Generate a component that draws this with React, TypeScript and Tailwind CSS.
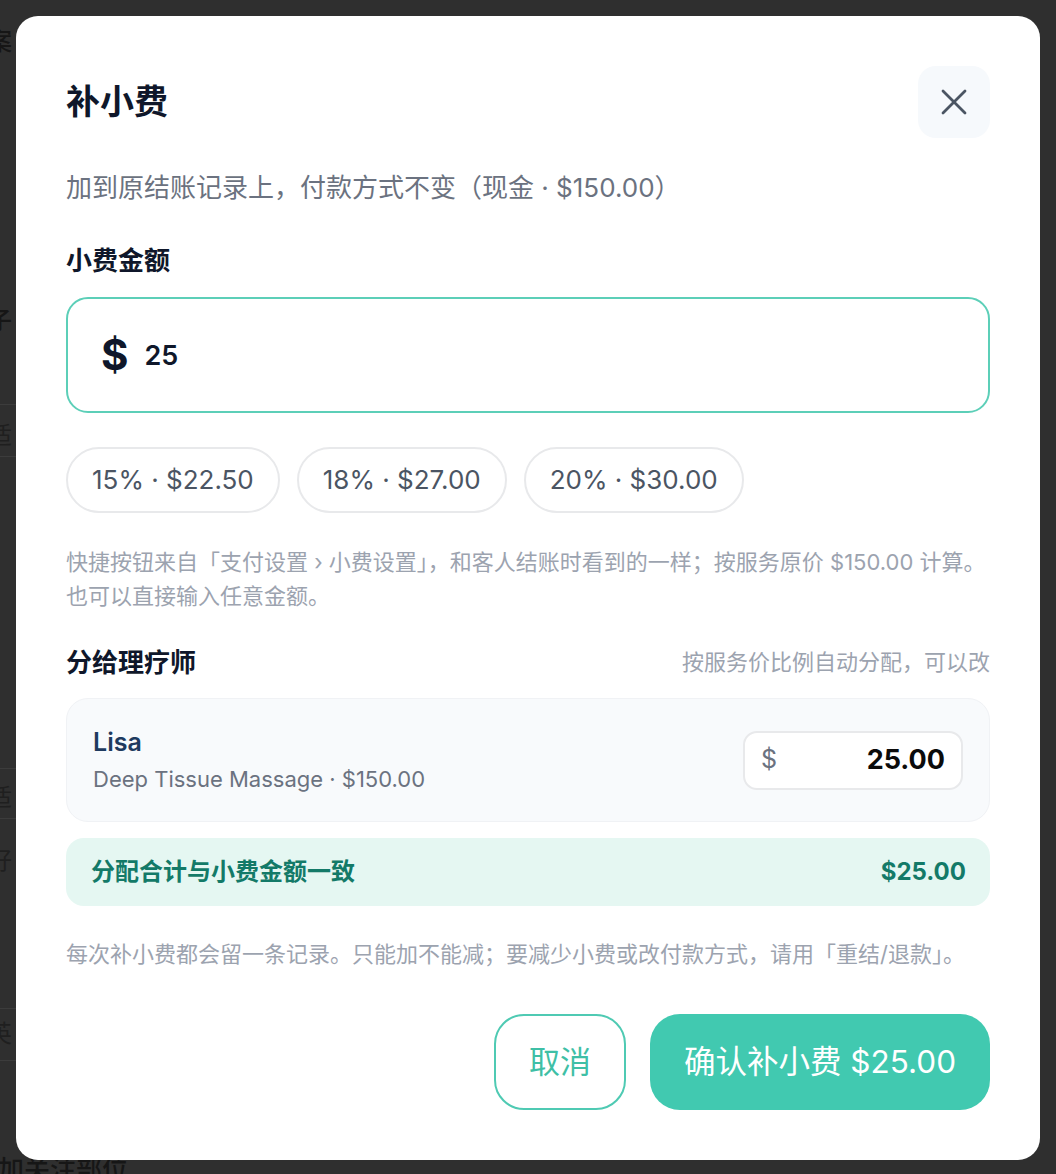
import React from "react";

const font = { fontFamily: '"Inter", "Noto Sans CJK SC", sans-serif' };

function Chip({ label }: { label: string }) {
  return (
    <button className="h-[66px] px-[24px] rounded-full border-2 border-[#e8e9eb] bg-white text-[26px] text-[#4b5563] leading-none">
      {label}
    </button>
  );
}

export default function App() {
  return (
    <div className="relative w-full h-[1174px] bg-[#2f2f2f] overflow-hidden" style={font}>
      {/* dimmed page behind the dialog */}
      <div className="absolute inset-0 text-[#161616] text-[24px] font-medium">
        <div className="absolute left-[-12px] top-[24px]">案</div>
        <div className="absolute left-[-12px] top-[303px]">子</div>
        <div className="absolute left-0 top-[404px] w-[16px] h-px bg-[#3c3c3c]" />
        <div className="absolute left-[-12px] top-[418px] text-[#1f1f1f] font-normal">适</div>
        <div className="absolute left-0 top-[456px] w-[16px] h-px bg-[#3c3c3c]" />
        <div className="absolute left-0 top-[768px] w-[16px] h-px bg-[#3c3c3c]" />
        <div className="absolute left-[-12px] top-[780px] text-[#1f1f1f] font-normal">适</div>
        <div className="absolute left-0 top-[818px] w-[16px] h-px bg-[#3c3c3c]" />
        <div className="absolute left-[-12px] top-[843px] text-[#1f1f1f] font-normal">好</div>
        <div className="absolute left-0 top-[1008px] w-[16px] h-px bg-[#3c3c3c]" />
        <div className="absolute left-[-12px] top-[1016px] text-[#1f1f1f] font-normal">英</div>
        <div className="absolute left-0 top-[1060px] w-[16px] h-px bg-[#3c3c3c]" />
        <div className="absolute left-[-2px] top-[1150px] text-[26px]">加关注部位</div>
      </div>

      <div className="relative m-4 h-[1144px] bg-white rounded-[22px] px-[50px] pt-[50px] pb-[50px] flex flex-col">
        {/* header */}
        <div className="flex items-center justify-between h-[72px]">
          <h1 className="text-[34px] font-bold text-[#0f172a] leading-none">补小费</h1>
          <button className="w-[72px] h-[72px] rounded-[18px] bg-[#f6f9fc] flex items-center justify-center">
            <svg width="28" height="28" viewBox="0 0 28 28" fill="none" stroke="#4b5563" strokeWidth="2.8" strokeLinecap="round">
              <line x1="3" y1="3" x2="25" y2="25" />
              <line x1="25" y1="3" x2="3" y2="25" />
            </svg>
          </button>
        </div>

        <p className="mt-[33px] text-[26px] leading-[34px] text-[#6b7280]">
          加到原结账记录上，付款方式不变（现金 · $150.00）
        </p>

        <div className="mt-[39px] text-[26px] leading-[34px] font-semibold text-[#0f172a]">小费金额</div>

        <div className="mt-[19px] h-[116px] rounded-[22px] border-2 border-[#5ccfb8] flex items-center px-[33px]">
          <span className="text-[42px] font-bold text-[#0f172a] leading-none">$</span>
          <span className="ml-[16px] text-[27px] font-semibold text-[#0f172a] leading-none">25</span>
        </div>

        <div className="mt-[34px] flex gap-[17px]">
          <Chip label="15% · $22.50" />
          <Chip label="18% · $27.00" />
          <Chip label="20% · $30.00" />
        </div>

        <p className="mt-[32px] text-[22px] leading-[34px] text-[#9ca3af]">
          快捷按钮来自「支付设置 › 小费设置」，和客人结账时看到的一样；按服务原价 $150.00 计算。
          <br />
          也可以直接输入任意金额。
        </p>

        <div className="mt-[32px] flex items-center justify-between h-[34px]">
          <span className="text-[26px] font-semibold text-[#0f172a]">分给理疗师</span>
          <span className="text-[22px] text-[#9ca3af]">按服务价比例自动分配，可以改</span>
        </div>

        <div className="mt-[19px] h-[124px] rounded-[22px] bg-[#f8fafc] border border-[#f0f2f5] flex items-center justify-between px-[26px]">
          <div className="flex flex-col">
            <span className="text-[25px] leading-[30px] font-semibold text-[#1e3a5f]">Lisa</span>
            <span className="mt-[8px] text-[22px] leading-[28px] text-[#6b7280]">Deep Tissue Massage · $150.00</span>
          </div>
          <div className="w-[220px] h-[59px] rounded-[14px] bg-white border-2 border-[#e8e9eb] flex items-center justify-between px-[16px]">
            <span className="text-[25px] text-[#6b7280]">$</span>
            <span className="text-[27px] font-bold text-[#0b0b0b]">25.00</span>
          </div>
        </div>

        <div className="mt-[16px] h-[68px] rounded-[18px] bg-[#e5f7f2] flex items-center justify-between pl-[25px] pr-[24px]">
          <span className="text-[24px] font-bold text-[#137a68]">分配合计与小费金额一致</span>
          <span className="text-[24px] font-bold text-[#137a68]">$25.00</span>
        </div>

        <p className="mt-[31px] text-[22px] leading-[34px] text-[#9ca3af]">
          每次补小费都会留一条记录。只能加不能减；要减少小费或改付款方式，请用「重结/退款」。
        </p>

        <div className="mt-[43px] flex justify-end gap-[24px]">
          <button className="w-[132px] h-[96px] rounded-[30px] border-2 border-[#4fcab3] bg-white text-[31px] text-[#3fbfa6]">
            取消
          </button>
          <button className="w-[340px] h-[96px] rounded-[30px] bg-[#41c9b0] text-[31.5px] text-white">
            确认补小费 $25.00
          </button>
        </div>
      </div>
    </div>
  );
}
